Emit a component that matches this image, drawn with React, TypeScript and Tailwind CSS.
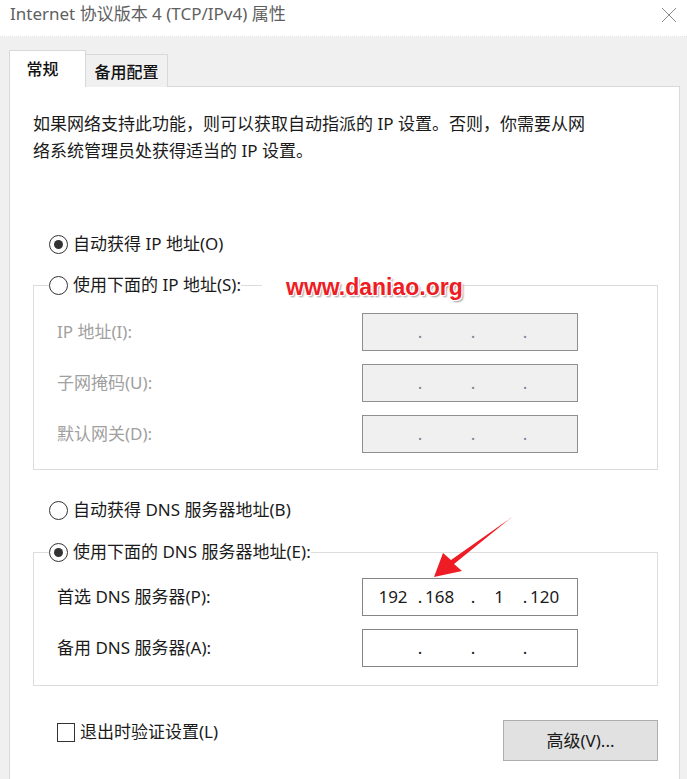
import React from 'react';

const FONT = "font-['Noto_Sans','Noto_Sans_CJK_SC',sans-serif]";

const Radio = ({ checked, label }: { checked: boolean; label: string }) => (
  <div className="flex items-center h-[24px]">
    <span className="w-[19px] h-[19px] rounded-full border-[1.5px] border-[#333] bg-white flex items-center justify-center">
      {checked && <span className="w-[9px] h-[9px] rounded-full bg-[#333]" />}
    </span>
    <span className="ml-[5px] text-[17px] leading-[24px] text-[#1a1a1a] whitespace-nowrap">{label}</span>
  </div>
);

interface IpBoxProps {
  disabled?: boolean;
  values?: [string, string, string, string];
}

const IpBox: React.FC<IpBoxProps> = ({ disabled, values = ['', '', '', ''] }) => {
  const dot = disabled ? 'text-[#7a8696]' : 'text-[#1a1a1a]';
  return (
    <div
      className={`w-[216px] h-[38px] border flex items-center text-[17px] leading-[20px] ${
        disabled ? 'bg-[#f0f0f0] border-[#8f8f8f]' : 'bg-white border-[#858585]'
      } text-[#1a1a1a]`}
    >
      <span className="w-[52px] pl-[8px] text-center">{values[0]}</span>
      <span className={`w-[10px] text-center ${dot}`}>.</span>
      <span className="w-[43px] text-left">{values[1]}</span>
      <span className={`w-[10px] text-center ${dot}`}>.</span>
      <span className="w-[42px] text-center">{values[2]}</span>
      <span className={`w-[10px] text-center ${dot}`}>.</span>
      <span className="flex-1 text-left">{values[3]}</span>
    </div>
  );
};

const Row = ({ label, disabled, values }: { label: string; disabled?: boolean; values?: [string, string, string, string] }) => (
  <div className="flex items-center h-[38px]">
    <span
      className={`ml-[8px] w-[305px] text-[17px] leading-[24px] whitespace-nowrap ${
        disabled ? 'text-[#a0a0a0]' : 'text-[#1a1a1a]'
      }`}
    >
      {label}
    </span>
    <IpBox disabled={disabled} values={values} />
  </div>
);

export default function App() {
  return (
    <div className={`relative w-[687px] h-[779px] overflow-hidden bg-[#f0f0f0] ${FONT}`}>
      {/* title bar */}
      <div className="h-[37px] bg-white flex items-start justify-between border-b border-dotted border-[#e4e4e4]">
        <span className="pl-[10px] text-[17px] leading-[28px] text-[#5f5f5f] whitespace-nowrap">
          Internet 协议版本 4 (TCP/IPv4) 属性
        </span>
        <svg className="mt-[7px] mr-[10px]" width="16" height="16" viewBox="0 0 16 16">
          <path d="M1 1 L15 15 M15 1 L1 15" stroke="#8a8a8a" strokeWidth="1" fill="none" />
        </svg>
      </div>

      {/* tabs */}
      <div className="relative z-10 flex items-end pl-[9px] pt-[13px] -mb-px">
        <div className="w-[77px] h-[37px] bg-white border border-b-0 border-[#d9d9d9] flex items-center justify-center pr-[10px]">
          <span className="text-[16px] leading-[20px] font-medium text-[#111]">常规</span>
        </div>
        <div className="w-[82px] h-[33px] bg-[#f0f0f0] border border-l-0 border-b-0 border-[#d9d9d9] flex items-center justify-center">
          <span className="text-[16px] leading-[20px] font-medium text-[#111] pt-[2px]">备用配置</span>
        </div>
      </div>

      {/* panel */}
      <div className="ml-[9px] w-[671px] h-[720px] bg-white border border-[#d9d9d9]">
        <p className="pl-[23px] pt-[23px] text-[17px] leading-[27px] text-[#1a1a1a] whitespace-nowrap">
          如果网络支持此功能，则可以获取自动指派的 IP 设置。否则，你需要从网
          <br />
          络系统管理员处获得适当的 IP 设置。
        </p>

        <div className="ml-[39px] mt-[68px]">
          <Radio checked label="自动获得 IP 地址(O)" />
        </div>

        <fieldset className="ml-[23px] mt-[17px] w-[625px] border border-[#dcdcdc] pb-[16px]">
          <legend className="ml-[15px]">
            <Radio checked={false} label="使用下面的 IP 地址(S):" />
          </legend>
          <div className="pl-[15px] pt-[16px] flex flex-col gap-[13px]">
            <Row label="IP 地址(I):" disabled />
            <Row label="子网掩码(U):" disabled />
            <Row label="默认网关(D):" disabled />
          </div>
        </fieldset>

        <div className="ml-[39px] mt-[28px]">
          <Radio checked={false} label="自动获得 DNS 服务器地址(B)" />
        </div>

        <fieldset className="ml-[23px] mt-[18px] w-[625px] border border-[#dcdcdc] pb-[18px]">
          <legend className="ml-[15px]">
            <Radio checked label="使用下面的 DNS 服务器地址(E):" />
          </legend>
          <div className="pl-[15px] pt-[14px] flex flex-col gap-[13px]">
            <Row label="首选 DNS 服务器(P):" values={['192', '168', '1', '120']} />
            <Row label="备用 DNS 服务器(A):" />
          </div>
        </fieldset>

        <div className="mt-[34px] flex items-start">
          <div className="ml-[47px] flex items-center h-[24px]">
            <span className="w-[18px] h-[19px] border-[1.5px] border-[#333] bg-white" />
            <span className="ml-[5px] text-[17px] leading-[24px] text-[#1a1a1a] whitespace-nowrap">退出时验证设置(L)</span>
          </div>
          <button className="ml-auto mr-[21px] w-[155px] h-[41px] bg-[#e1e1e1] border border-[#adadad] text-[17px] leading-[24px] text-[#1a1a1a]">
            高级(V)...
          </button>
        </div>
      </div>

      {/* watermark overlay */}
      <div className="absolute left-[262px] top-[273px] pl-[24px] bg-white">
        <span className="font-['Liberation_Sans',sans-serif] font-bold text-[23px] leading-[28px] text-[#ee1c25] [text-shadow:1px_1px_0_#fff,-1px_-1px_0_#fff,1px_-1px_0_#fff,-1px_1px_0_#fff,2px_2px_2px_#9a9a9a] whitespace-nowrap">
          www.daniao.org
        </span>
      </div>

      {/* arrow overlay */}
      <svg className="absolute left-0 top-0 pointer-events-none" width="687" height="779" viewBox="0 0 687 779">
        <polygon points="512,517 454,564 462,571 434,577 443,553 451,560" fill="#ee1c25" />
      </svg>
    </div>
  );
}
